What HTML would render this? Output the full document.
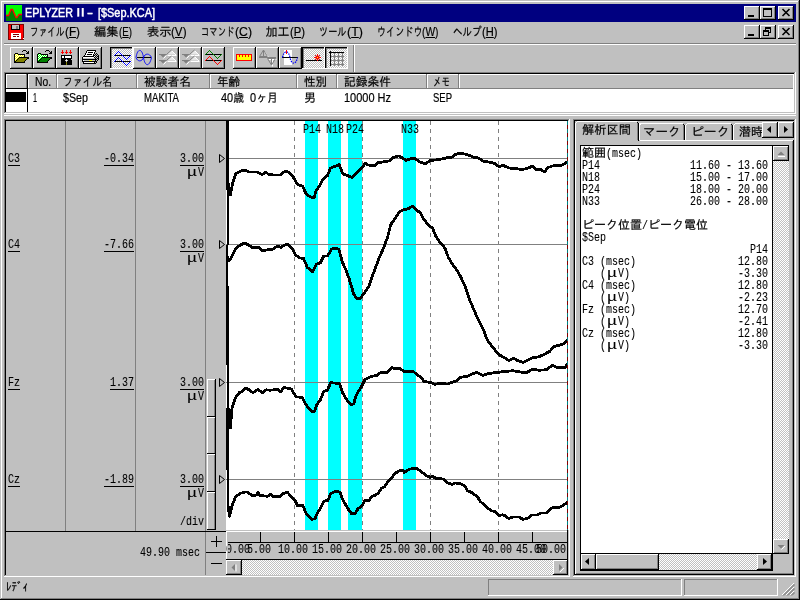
<!DOCTYPE html>
<html lang="ja"><head><meta charset="utf-8"><title>EPLYZER II - [$Sep.KCA]</title><style>
html,body{margin:0;padding:0}
body{width:800px;height:600px;background:#c0c0c0;position:relative;overflow:hidden}
#w{position:absolute;left:0;top:0;width:800px;height:600px;will-change:transform}
i{position:absolute;display:block}
b{position:absolute;display:block;font-weight:normal;white-space:pre;line-height:12px;height:12px;transform-origin:0 0;color:#000;-webkit-text-stroke:0.2px currentColor}
.u{font-family:"Liberation Sans","IPAGothic",sans-serif;font-size:12px}
.j{font-family:"Liberation Sans","IPAGothic",sans-serif;font-size:12px}
.m{font-family:"Liberation Mono","IPAGothic",monospace;font-size:13px;-webkit-text-stroke:0.1px currentColor}
svg{position:absolute;display:block;overflow:visible}
</style></head><body><div id="w"><i style="left:1px;top:1px;width:1px;height:598px;background:#fff"></i><i style="left:1px;top:1px;width:798px;height:1px;background:#fff"></i><i style="left:799px;top:0px;width:1px;height:600px;background:#000"></i><i style="left:0px;top:599px;width:800px;height:1px;background:#000"></i><i style="left:798px;top:1px;width:1px;height:598px;background:#808080"></i><i style="left:1px;top:598px;width:798px;height:1px;background:#808080"></i><i style="left:4px;top:4px;width:792px;height:18px;background:#000080"></i><svg style="left:6px;top:5px" width="16" height="16" viewBox="0 0 16 16" shape-rendering="crispEdges"><rect width="16" height="16" fill="#0f0"/><path d="M0 11h2v-1h1l2-5h2l3 8h1l2-3h3v6H0z" fill="#008000"/><path d="M0 10.5h2.5L5 4.5h1.5L10 12.500h1l2-3h3" fill="none" stroke="#f00" stroke-width="1.3" shape-rendering="auto"/></svg><b id="t0" class="u" style="left:25px;top:7px;transform:scaleX(0.8922);color:#fff;-webkit-text-stroke:0.45px #fff;">EPLYZER</b><b id="t1" class="u" style="left:71.5px;top:7px;transform:scaleX(1.4167);color:#fff;-webkit-text-stroke:0.2px #fff;">Ⅱ</b><b id="t2" class="u" style="left:87px;top:7px;transform:scaleX(1.5000);color:#fff;-webkit-text-stroke:0.45px #fff;">-</b><b id="t3" class="u" style="left:98px;top:7px;transform:scaleX(0.9090);color:#fff;-webkit-text-stroke:0.45px #fff;">[$Sep.KCA]</b><i style="left:744px;top:6px;width:16px;height:14px;background:#c0c0c0"></i><i style="left:744px;top:6px;width:16px;height:1px;background:#fff"></i><i style="left:744px;top:6px;width:1px;height:14px;background:#fff"></i><i style="left:744px;top:19px;width:16px;height:1px;background:#000"></i><i style="left:759px;top:6px;width:1px;height:14px;background:#000"></i><i style="left:745px;top:18px;width:14px;height:1px;background:#808080"></i><i style="left:758px;top:7px;width:1px;height:12px;background:#808080"></i><i style="left:748px;top:15px;width:6px;height:2px;background:#000"></i><i style="left:760px;top:6px;width:16px;height:14px;background:#c0c0c0"></i><i style="left:760px;top:6px;width:16px;height:1px;background:#fff"></i><i style="left:760px;top:6px;width:1px;height:14px;background:#fff"></i><i style="left:760px;top:19px;width:16px;height:1px;background:#000"></i><i style="left:775px;top:6px;width:1px;height:14px;background:#000"></i><i style="left:761px;top:18px;width:14px;height:1px;background:#808080"></i><i style="left:774px;top:7px;width:1px;height:12px;background:#808080"></i><i style="left:763px;top:8px;width:9px;height:9px;background:#000"></i><i style="left:764px;top:10px;width:7px;height:6px;background:#c0c0c0"></i><i style="left:778px;top:6px;width:16px;height:14px;background:#c0c0c0"></i><i style="left:778px;top:6px;width:16px;height:1px;background:#fff"></i><i style="left:778px;top:6px;width:1px;height:14px;background:#fff"></i><i style="left:778px;top:19px;width:16px;height:1px;background:#000"></i><i style="left:793px;top:6px;width:1px;height:14px;background:#000"></i><i style="left:779px;top:18px;width:14px;height:1px;background:#808080"></i><i style="left:792px;top:7px;width:1px;height:12px;background:#808080"></i><svg style="left:782px;top:9px" width="8" height="7" viewBox="0 0 8 7"><path d="M0.5 0l7 7M7.5 0l-7 7" stroke="#000" stroke-width="1.6" fill="none"/></svg><svg style="left:8px;top:24px" width="16" height="16" viewBox="0 0 16 16" shape-rendering="crispEdges"><rect x="0" y="0" width="16" height="16" fill="#800000"/><rect x="1" y="1" width="14" height="14" fill="#f00"/><rect x="3" y="1" width="9" height="5" fill="#000"/><rect x="4" y="1" width="7" height="4" fill="#c0c0c0"/><rect x="8" y="2" width="2" height="3" fill="#808080"/><rect x="3" y="9" width="10" height="6" fill="#fff"/><rect x="5" y="10" width="6" height="1" fill="#800000"/><rect x="5" y="12" width="3" height="1" fill="#800000"/><rect x="9" y="12" width="2" height="1" fill="#800000"/><rect x="15" y="14" width="1" height="1" fill="#fff"/></svg><b id="t4" class="u" style="left:29.5px;top:26px;transform:scaleX(0.7188);">ファイル</b><b id="t5" class="u" style="left:64.5px;top:26px;transform:scaleX(0.9776);">(<u>F</u>)</b><b id="t6" class="u" style="left:93.5px;top:26px;transform:scaleX(1.0208);">編集</b><b id="t7" class="u" style="left:118.5px;top:26px;transform:scaleX(0.8117);">(<u>E</u>)</b><b id="t8" class="u" style="left:146.5px;top:26px;transform:scaleX(1.0208);">表示</b><b id="t9" class="u" style="left:171.0px;top:26px;transform:scaleX(0.9678);">(<u>V</u>)</b><b id="t10" class="u" style="left:200.5px;top:26px;transform:scaleX(0.6979);">コマンド</b><b id="t11" class="u" style="left:235.0px;top:26px;transform:scaleX(1.0197);">(<u>C</u>)</b><b id="t12" class="u" style="left:265.5px;top:26px;">加工</b><b id="t13" class="u" style="left:289.5px;top:26px;transform:scaleX(0.9366);">(<u>P</u>)</b><b id="t14" class="u" style="left:318.5px;top:26px;transform:scaleX(0.7639);">ツール</b><b id="t15" class="u" style="left:347.0px;top:26px;transform:scaleX(1.0428);">(<u>T</u>)</b><b id="t16" class="u" style="left:376.5px;top:26px;transform:scaleX(0.7583);">ウインドウ</b><b id="t17" class="u" style="left:422.0px;top:26px;transform:scaleX(0.8537);">(<u>W</u>)</b><b id="t18" class="u" style="left:452.5px;top:26px;transform:scaleX(0.7917);">ヘルプ</b><b id="t19" class="u" style="left:482.0px;top:26px;transform:scaleX(0.9297);">(<u>H</u>)</b><i style="left:744px;top:25px;width:16px;height:14px;background:#c0c0c0"></i><i style="left:744px;top:25px;width:16px;height:1px;background:#fff"></i><i style="left:744px;top:25px;width:1px;height:14px;background:#fff"></i><i style="left:744px;top:38px;width:16px;height:1px;background:#000"></i><i style="left:759px;top:25px;width:1px;height:14px;background:#000"></i><i style="left:745px;top:37px;width:14px;height:1px;background:#808080"></i><i style="left:758px;top:26px;width:1px;height:12px;background:#808080"></i><i style="left:748px;top:34px;width:6px;height:2px;background:#000"></i><i style="left:760px;top:25px;width:16px;height:14px;background:#c0c0c0"></i><i style="left:760px;top:25px;width:16px;height:1px;background:#fff"></i><i style="left:760px;top:25px;width:1px;height:14px;background:#fff"></i><i style="left:760px;top:38px;width:16px;height:1px;background:#000"></i><i style="left:775px;top:25px;width:1px;height:14px;background:#000"></i><i style="left:761px;top:37px;width:14px;height:1px;background:#808080"></i><i style="left:774px;top:26px;width:1px;height:12px;background:#808080"></i><i style="left:765px;top:27px;width:6px;height:6px;background:#000"></i><i style="left:766px;top:29px;width:4px;height:3px;background:#c0c0c0"></i><i style="left:763px;top:30px;width:6px;height:6px;background:#000"></i><i style="left:764px;top:32px;width:4px;height:3px;background:#c0c0c0"></i><i style="left:778px;top:25px;width:16px;height:14px;background:#c0c0c0"></i><i style="left:778px;top:25px;width:16px;height:1px;background:#fff"></i><i style="left:778px;top:25px;width:1px;height:14px;background:#fff"></i><i style="left:778px;top:38px;width:16px;height:1px;background:#000"></i><i style="left:793px;top:25px;width:1px;height:14px;background:#000"></i><i style="left:779px;top:37px;width:14px;height:1px;background:#808080"></i><i style="left:792px;top:26px;width:1px;height:12px;background:#808080"></i><svg style="left:782px;top:28px" width="8" height="7" viewBox="0 0 8 7"><path d="M0.5 0l7 7M7.5 0l-7 7" stroke="#000" stroke-width="1.6" fill="none"/></svg><i style="left:4px;top:43px;width:792px;height:1px;background:#808080"></i><i style="left:4px;top:44px;width:792px;height:1px;background:#fff"></i><i style="left:353px;top:45px;width:1px;height:27px;background:#808080"></i><i style="left:354px;top:45px;width:1px;height:27px;background:#fff"></i><i style="left:10px;top:47px;width:23px;height:22px;background:#c0c0c0"></i><i style="left:10px;top:47px;width:23px;height:1px;background:#fff"></i><i style="left:10px;top:47px;width:1px;height:22px;background:#fff"></i><i style="left:10px;top:68px;width:23px;height:1px;background:#000"></i><i style="left:32px;top:47px;width:1px;height:22px;background:#000"></i><i style="left:11px;top:67px;width:21px;height:1px;background:#808080"></i><i style="left:31px;top:48px;width:1px;height:20px;background:#808080"></i><svg style="left:10px;top:47px" width="22" height="16" viewBox="0 0 22 16" shape-rendering="crispEdges"><path fill="#000" d="M13 3h3v1h-3zM12 4h1v1h-1zM16 4h1v1h-1zM18 4h1v1h-1zM17 5h2v1h-2zM5 6h3v1h-3zM16 6h3v1h-3zM4 7h1v1h-1zM8 7h7v1h-7zM4 8h1v1h-1zM14 8h1v1h-1zM4 9h1v1h-1zM14 9h1v1h-1zM4 10h1v1h-1zM9 10h10v1h-10zM4 11h1v1h-1zM8 11h1v1h-1zM17 11h2v1h-2zM4 12h1v1h-1zM7 12h1v1h-1zM16 12h1v1h-1zM4 13h1v1h-1zM6 13h1v1h-1zM15 13h1v1h-1zM4 14h2v1h-2zM14 14h1v1h-1zM4 15h11v1h-11z"/><path fill="#ff0" d="M5 7h1v1h-1zM7 7h1v1h-1zM6 8h1v1h-1zM8 8h1v1h-1zM10 8h1v1h-1zM12 8h1v1h-1zM5 9h1v1h-1zM7 9h1v1h-1zM9 9h1v1h-1zM11 9h1v1h-1zM13 9h1v1h-1zM6 10h1v1h-1zM8 10h1v1h-1zM5 11h1v1h-1zM7 11h1v1h-1zM6 12h1v1h-1zM5 13h1v1h-1z"/><path fill="#fff" d="M6 7h1v1h-1zM5 8h1v1h-1zM7 8h1v1h-1zM9 8h1v1h-1zM11 8h1v1h-1zM13 8h1v1h-1zM6 9h1v1h-1zM8 9h1v1h-1zM10 9h1v1h-1zM12 9h1v1h-1zM5 10h1v1h-1zM7 10h1v1h-1zM6 11h1v1h-1zM5 12h1v1h-1z"/><path fill="#808000" d="M9 11h8v1h-8zM8 12h8v1h-8zM7 13h8v1h-8zM6 14h8v1h-8z"/></svg><i style="left:33px;top:47px;width:23px;height:22px;background:#c0c0c0"></i><i style="left:33px;top:47px;width:23px;height:1px;background:#fff"></i><i style="left:33px;top:47px;width:1px;height:22px;background:#fff"></i><i style="left:33px;top:68px;width:23px;height:1px;background:#000"></i><i style="left:55px;top:47px;width:1px;height:22px;background:#000"></i><i style="left:34px;top:67px;width:21px;height:1px;background:#808080"></i><i style="left:54px;top:48px;width:1px;height:20px;background:#808080"></i><svg style="left:33px;top:47px" width="22" height="16" viewBox="0 0 22 16" shape-rendering="crispEdges"><path fill="#000" d="M13 3h3v1h-3zM12 4h1v1h-1zM16 4h1v1h-1zM18 4h1v1h-1zM17 5h2v1h-2zM5 6h3v1h-3zM16 6h3v1h-3zM4 7h1v1h-1zM8 7h7v1h-7zM4 8h1v1h-1zM14 8h1v1h-1zM4 9h1v1h-1zM14 9h1v1h-1zM4 10h1v1h-1zM9 10h10v1h-10zM4 11h1v1h-1zM8 11h1v1h-1zM17 11h2v1h-2zM4 12h1v1h-1zM7 12h1v1h-1zM16 12h1v1h-1zM4 13h1v1h-1zM6 13h1v1h-1zM15 13h1v1h-1zM4 14h2v1h-2zM14 14h1v1h-1zM4 15h11v1h-11z"/><path fill="#0f0" d="M5 7h1v1h-1zM7 7h1v1h-1zM6 8h1v1h-1zM8 8h1v1h-1zM10 8h1v1h-1zM12 8h1v1h-1zM5 9h1v1h-1zM7 9h1v1h-1zM9 9h1v1h-1zM11 9h1v1h-1zM13 9h1v1h-1zM6 10h1v1h-1zM8 10h1v1h-1zM5 11h1v1h-1zM7 11h1v1h-1zM6 12h1v1h-1zM5 13h1v1h-1z"/><path fill="#fff" d="M6 7h1v1h-1zM5 8h1v1h-1zM7 8h1v1h-1zM9 8h1v1h-1zM11 8h1v1h-1zM13 8h1v1h-1zM6 9h1v1h-1zM8 9h1v1h-1zM10 9h1v1h-1zM12 9h1v1h-1zM5 10h1v1h-1zM7 10h1v1h-1zM6 11h1v1h-1zM5 12h1v1h-1z"/><path fill="#008000" d="M9 11h8v1h-8zM8 12h8v1h-8zM7 13h8v1h-8zM6 14h8v1h-8z"/></svg><i style="left:56px;top:47px;width:23px;height:22px;background:#c0c0c0"></i><i style="left:56px;top:47px;width:23px;height:1px;background:#fff"></i><i style="left:56px;top:47px;width:1px;height:22px;background:#fff"></i><i style="left:56px;top:68px;width:23px;height:1px;background:#000"></i><i style="left:78px;top:47px;width:1px;height:22px;background:#000"></i><i style="left:57px;top:67px;width:21px;height:1px;background:#808080"></i><i style="left:77px;top:48px;width:1px;height:20px;background:#808080"></i><svg style="left:56px;top:47px" width="22" height="18" viewBox="0 0 22 18" shape-rendering="crispEdges"><path fill="#f00" d="M6 3h1v1h-1zM10 3h1v1h-1zM14 3h1v1h-1zM6 4h1v1h-1zM10 4h1v1h-1zM14 4h1v1h-1zM5 5h3v1h-3zM9 5h3v1h-3zM13 5h3v1h-3zM6 6h1v1h-1zM10 6h1v1h-1zM14 6h1v1h-1z"/><path fill="#000" d="M5 8h11v1h-11zM5 9h1v1h-1zM8 9h1v1h-1zM15 9h1v1h-1zM5 10h1v1h-1zM8 10h1v1h-1zM15 10h1v1h-1zM5 11h11v1h-11zM5 12h5v1h-5zM11 12h4v1h-4zM5 13h4v1h-4zM12 13h4v1h-4zM5 14h5v1h-5zM11 14h5v1h-5zM5 15h5v1h-5zM11 15h5v1h-5zM5 16h5v1h-5zM11 16h5v1h-5zM5 17h5v1h-5zM11 17h5v1h-5z"/><path fill="#fff" d="M6 9h2v1h-2zM9 9h6v1h-6zM6 10h2v1h-2zM9 10h6v1h-6zM10 13h1v1h-1z"/><path fill="#c0c0c0" d="M10 12h1v1h-1zM9 13h1v1h-1zM11 13h1v1h-1zM10 14h1v1h-1z"/><path fill="#808000" d="M10 15h1v1h-1zM10 16h1v1h-1zM10 17h1v1h-1z"/></svg><i style="left:79px;top:47px;width:23px;height:22px;background:#c0c0c0"></i><i style="left:79px;top:47px;width:23px;height:1px;background:#fff"></i><i style="left:79px;top:47px;width:1px;height:22px;background:#fff"></i><i style="left:79px;top:68px;width:23px;height:1px;background:#000"></i><i style="left:101px;top:47px;width:1px;height:22px;background:#000"></i><i style="left:80px;top:67px;width:21px;height:1px;background:#808080"></i><i style="left:100px;top:48px;width:1px;height:20px;background:#808080"></i><svg style="left:79px;top:47px" width="22" height="17" viewBox="0 0 22 17" shape-rendering="crispEdges"><path fill="#000" d="M8 3h9v1h-9zM7 4h1v1h-1zM16 4h1v1h-1zM7 5h1v1h-1zM9 5h5v1h-5zM15 5h1v1h-1zM6 6h1v1h-1zM15 6h1v1h-1zM17 6h1v1h-1zM6 7h1v1h-1zM8 7h5v1h-5zM14 7h1v1h-1zM16 7h1v1h-1zM18 7h1v1h-1zM5 8h1v1h-1zM14 8h2v1h-2zM17 8h1v1h-1zM19 8h1v1h-1zM4 9h11v1h-11zM16 9h1v1h-1zM18 9h2v1h-2zM3 10h1v1h-1zM15 10h1v1h-1zM17 10h1v1h-1zM19 10h1v1h-1zM3 11h1v1h-1zM16 11h1v1h-1zM18 11h2v1h-2zM3 12h15v1h-15zM19 12h1v1h-1zM3 13h1v1h-1zM16 13h1v1h-1zM18 13h1v1h-1zM3 14h15v1h-15zM4 15h1v1h-1zM15 15h1v1h-1zM17 15h1v1h-1zM4 16h13v1h-13z"/><path fill="#fff" d="M8 4h8v1h-8zM8 5h1v1h-1zM14 5h1v1h-1zM7 6h8v1h-8zM7 7h1v1h-1zM13 7h1v1h-1zM6 8h8v1h-8zM15 9h1v1h-1zM4 10h11v1h-11zM4 13h1v1h-1zM5 15h10v1h-10z"/><path fill="#c0c0c0" d="M4 11h12v1h-12zM5 13h5v1h-5zM13 13h3v1h-3z"/><path fill="#ff0" d="M10 13h3v1h-3z"/></svg><i style="left:110px;top:47px;width:23px;height:22px;background:#c0c0c0;background-image:conic-gradient(#fff 25%,#c0c0c0 0 50%,#fff 0 75%,#c0c0c0 0);background-size:2px 2px"></i><i style="left:110px;top:47px;width:23px;height:1px;background:#000"></i><i style="left:110px;top:47px;width:1px;height:22px;background:#000"></i><i style="left:111px;top:48px;width:21px;height:1px;background:#808080"></i><i style="left:111px;top:48px;width:1px;height:20px;background:#808080"></i><i style="left:110px;top:68px;width:23px;height:1px;background:#fff"></i><i style="left:132px;top:47px;width:1px;height:22px;background:#fff"></i><svg style="left:110px;top:47px" width="23" height="22" viewBox="0 0 23 22" shape-rendering="crispEdges"><path fill="#00f" d="M8 4h1v1h-1zM7 5h1v1h-1zM9 5h1v1h-1zM6 6h1v1h-1zM10 6h1v1h-1zM5 7h1v1h-1zM11 7h1v1h-1zM4 8h1v1h-1zM12 8h1v1h-1zM20 8h1v1h-1zM13 9h1v1h-1zM19 9h1v1h-1zM8 10h1v1h-1zM14 10h1v1h-1zM18 10h1v1h-1zM7 11h1v1h-1zM9 11h1v1h-1zM15 11h1v1h-1zM17 11h1v1h-1zM6 12h1v1h-1zM10 12h1v1h-1zM16 12h1v1h-1zM5 13h1v1h-1zM11 13h1v1h-1zM4 14h1v1h-1zM12 14h1v1h-1zM20 14h1v1h-1zM13 15h1v1h-1zM19 15h1v1h-1zM14 16h1v1h-1zM18 16h1v1h-1zM15 17h1v1h-1zM17 17h1v1h-1zM16 18h1v1h-1z"/><path fill="#000" d="M5 8h7v1h-7zM13 8h7v1h-7zM5 14h7v1h-7zM13 14h7v1h-7z"/></svg><i style="left:133px;top:47px;width:23px;height:22px;background:#c0c0c0"></i><i style="left:133px;top:47px;width:23px;height:1px;background:#fff"></i><i style="left:133px;top:47px;width:1px;height:22px;background:#fff"></i><i style="left:133px;top:68px;width:23px;height:1px;background:#000"></i><i style="left:155px;top:47px;width:1px;height:22px;background:#000"></i><i style="left:134px;top:67px;width:21px;height:1px;background:#808080"></i><i style="left:154px;top:48px;width:1px;height:20px;background:#808080"></i><svg style="left:133px;top:47px" width="23" height="22" viewBox="0 0 23 22"><path d="M4 10.500h14" stroke="#000"/><path d="M3 10.500C4.500 1 9 1 10.500 10.500C12 20 16.500 20 18.500 10.500M3 10.500C4.500 15 9 15 10.500 10.500C12 6 16.500 6 18.500 10.500" fill="none" stroke="#00f" stroke-width="0.9"/></svg><i style="left:156px;top:47px;width:23px;height:22px;background:#c0c0c0"></i><i style="left:156px;top:47px;width:23px;height:1px;background:#fff"></i><i style="left:156px;top:47px;width:1px;height:22px;background:#fff"></i><i style="left:156px;top:68px;width:23px;height:1px;background:#000"></i><i style="left:178px;top:47px;width:1px;height:22px;background:#000"></i><i style="left:157px;top:67px;width:21px;height:1px;background:#808080"></i><i style="left:177px;top:48px;width:1px;height:20px;background:#808080"></i><svg style="left:156px;top:47px" width="23" height="22" viewBox="0 0 23 22"><path d="M11 7.5l4.500-4l4 4z" fill="#e8e8e8"/><path d="M11.500 8.5h9M7.500 11.5l3-3M16 4.0l4 4" fill="none" stroke="#fff"/><path d="M3 7.5h7.500l5-4.500" fill="none" stroke="#808080"/><path d="M4.500 8.0h5l-2.500 2.500z" fill="#808080"/><path d="M11 13.5l4.500-4l4 4z" fill="#e8e8e8"/><path d="M11.500 14.5h9M7.500 17.5l3-3M16 10.0l4 4" fill="none" stroke="#fff"/><path d="M3 13.5h7.500l5-4.500" fill="none" stroke="#808080"/><path d="M4.500 14.0h5l-2.500 2.500z" fill="#808080"/></svg><i style="left:179px;top:47px;width:23px;height:22px;background:#c0c0c0"></i><i style="left:179px;top:47px;width:23px;height:1px;background:#fff"></i><i style="left:179px;top:47px;width:1px;height:22px;background:#fff"></i><i style="left:179px;top:68px;width:23px;height:1px;background:#000"></i><i style="left:201px;top:47px;width:1px;height:22px;background:#000"></i><i style="left:180px;top:67px;width:21px;height:1px;background:#808080"></i><i style="left:200px;top:48px;width:1px;height:20px;background:#808080"></i><svg style="left:179px;top:47px" width="23" height="22" viewBox="0 0 23 22"><path d="M11 7.5l4.500-4l4 4z" fill="#e8e8e8"/><path d="M11.500 8.5h9M7.500 11.5l3-3M16 4.0l4 4" fill="none" stroke="#fff"/><path d="M3 7.5h7.500l5-4.500" fill="none" stroke="#808080"/><path d="M4.500 8.0h5l-2.500 2.500z" fill="#808080"/><path d="M11 13.5l4.500-4l4 4z" fill="#e8e8e8"/><path d="M11.500 14.5h9M7.500 17.5l3-3M16 10.0l4 4" fill="none" stroke="#fff"/><path d="M3 13.5h7.500l5-4.500" fill="none" stroke="#808080"/><path d="M4.500 14.0h5l-2.500 2.500z" fill="#808080"/></svg><i style="left:202px;top:47px;width:23px;height:22px;background:#c0c0c0"></i><i style="left:202px;top:47px;width:23px;height:1px;background:#fff"></i><i style="left:202px;top:47px;width:1px;height:22px;background:#fff"></i><i style="left:202px;top:68px;width:23px;height:1px;background:#000"></i><i style="left:224px;top:47px;width:1px;height:22px;background:#000"></i><i style="left:203px;top:67px;width:21px;height:1px;background:#808080"></i><i style="left:223px;top:48px;width:1px;height:20px;background:#808080"></i><svg style="left:202px;top:47px" width="23" height="22" viewBox="0 0 23 22" shape-rendering="crispEdges"><path fill="#008000" d="M7 3h1v1h-1zM6 4h1v1h-1zM8 4h1v1h-1zM5 5h1v1h-1zM9 5h1v1h-1zM4 6h1v1h-1zM10 6h1v1h-1zM3 7h1v1h-1zM11 7h1v1h-1zM19 7h1v1h-1zM12 8h1v1h-1zM18 8h1v1h-1zM13 9h1v1h-1zM17 9h1v1h-1zM14 10h1v1h-1zM16 10h1v1h-1zM15 11h1v1h-1z"/><path fill="#000" d="M4 7h7v1h-7zM12 7h7v1h-7zM4 13h7v1h-7zM12 13h7v1h-7z"/><path fill="#f00" d="M7 9h1v1h-1zM6 10h1v1h-1zM8 10h1v1h-1zM5 11h1v1h-1zM9 11h1v1h-1zM4 12h1v1h-1zM10 12h1v1h-1zM3 13h1v1h-1zM11 13h1v1h-1zM19 13h1v1h-1zM12 14h1v1h-1zM18 14h1v1h-1zM13 15h1v1h-1zM17 15h1v1h-1zM14 16h1v1h-1zM16 16h1v1h-1zM15 17h1v1h-1z"/></svg><i style="left:233px;top:47px;width:23px;height:22px;background:#c0c0c0"></i><i style="left:233px;top:47px;width:23px;height:1px;background:#fff"></i><i style="left:233px;top:47px;width:1px;height:22px;background:#fff"></i><i style="left:233px;top:68px;width:23px;height:1px;background:#000"></i><i style="left:255px;top:47px;width:1px;height:22px;background:#000"></i><i style="left:234px;top:67px;width:21px;height:1px;background:#808080"></i><i style="left:254px;top:48px;width:1px;height:20px;background:#808080"></i><svg style="left:233px;top:47px" width="22" height="14" viewBox="0 0 22 14" shape-rendering="crispEdges"><path fill="#f00" d="M3 7h16v1h-16zM3 8h1v1h-1zM6 8h1v1h-1zM9 8h1v1h-1zM12 8h1v1h-1zM15 8h1v1h-1zM18 8h1v1h-1zM3 9h1v1h-1zM6 9h1v1h-1zM9 9h1v1h-1zM12 9h1v1h-1zM15 9h1v1h-1zM18 9h1v1h-1zM3 10h1v1h-1zM18 10h1v1h-1zM3 11h1v1h-1zM18 11h1v1h-1zM3 12h1v1h-1zM18 12h1v1h-1zM3 13h16v1h-16z"/><path fill="#ff0" d="M4 8h2v1h-2zM7 8h2v1h-2zM10 8h2v1h-2zM13 8h2v1h-2zM16 8h2v1h-2zM4 9h2v1h-2zM7 9h2v1h-2zM10 9h2v1h-2zM13 9h2v1h-2zM16 9h2v1h-2zM4 10h14v1h-14zM4 11h14v1h-14zM4 12h14v1h-14z"/></svg><i style="left:256px;top:47px;width:23px;height:22px;background:#c0c0c0"></i><i style="left:256px;top:47px;width:23px;height:1px;background:#fff"></i><i style="left:256px;top:47px;width:1px;height:22px;background:#fff"></i><i style="left:256px;top:68px;width:23px;height:1px;background:#000"></i><i style="left:278px;top:47px;width:1px;height:22px;background:#000"></i><i style="left:257px;top:67px;width:21px;height:1px;background:#808080"></i><i style="left:277px;top:48px;width:1px;height:20px;background:#808080"></i><svg style="left:256px;top:47px" width="23" height="22" viewBox="0 0 23 22"><path d="M4.500 10.500h7l4 0M8.500 4.500l4 6M12.500 12.500h8M16.500 12.500v7" fill="none" stroke="#fff"/><path d="M3.500 9.500h7.500M3.500 9.500l4-6.500l4 6.500M7.500 3v6M3 10.500h17M11.500 11.500h8l-4 6.500zM15.500 11v7" fill="none" stroke="#808080"/></svg><i style="left:279px;top:47px;width:23px;height:22px;background:#c0c0c0"></i><i style="left:279px;top:47px;width:23px;height:1px;background:#fff"></i><i style="left:279px;top:47px;width:1px;height:22px;background:#fff"></i><i style="left:279px;top:68px;width:23px;height:1px;background:#000"></i><i style="left:301px;top:47px;width:1px;height:22px;background:#000"></i><i style="left:280px;top:67px;width:21px;height:1px;background:#808080"></i><i style="left:300px;top:48px;width:1px;height:20px;background:#808080"></i><svg style="left:279px;top:47px" width="23" height="22" viewBox="0 0 23 22"><rect x="5" y="3" width="8" height="15" fill="#fff"/><path d="M3 10.500h16" stroke="#000"/><path d="M3.500 10.500C5 3 9.500 3 11 10.500C12.500 18 17 18 18.500 10.500" fill="none" stroke="#00f" stroke-width="1.2" stroke-dasharray="1.5 1"/><path d="M7.500 3v4" stroke="#f00"/></svg><i style="left:302px;top:47px;width:23px;height:22px;background:#c0c0c0;background-image:conic-gradient(#fff 25%,#c0c0c0 0 50%,#fff 0 75%,#c0c0c0 0);background-size:2px 2px"></i><i style="left:302px;top:47px;width:23px;height:1px;background:#000"></i><i style="left:302px;top:47px;width:1px;height:22px;background:#000"></i><i style="left:303px;top:48px;width:21px;height:1px;background:#808080"></i><i style="left:303px;top:48px;width:1px;height:20px;background:#808080"></i><i style="left:302px;top:68px;width:23px;height:1px;background:#fff"></i><i style="left:324px;top:47px;width:1px;height:22px;background:#fff"></i><svg style="left:302px;top:47px" width="22" height="14" viewBox="0 0 22 14" shape-rendering="crispEdges"><path fill="#f00" d="M15 7h1v1h-1zM13 8h1v1h-1zM15 8h1v1h-1zM17 8h1v1h-1zM14 9h3v1h-3zM12 10h3v1h-3zM16 10h3v1h-3zM14 11h3v1h-3zM13 12h1v1h-1zM15 12h1v1h-1zM17 12h1v1h-1zM15 13h1v1h-1z"/><path fill="#ff0" d="M15 10h1v1h-1z"/><path fill="#000" d="M4 13h11v1h-11zM16 13h4v1h-4z"/></svg><i style="left:325px;top:47px;width:23px;height:22px;background:#c0c0c0;background-image:conic-gradient(#fff 25%,#c0c0c0 0 50%,#fff 0 75%,#c0c0c0 0);background-size:2px 2px"></i><i style="left:325px;top:47px;width:23px;height:1px;background:#000"></i><i style="left:325px;top:47px;width:1px;height:22px;background:#000"></i><i style="left:326px;top:48px;width:21px;height:1px;background:#808080"></i><i style="left:326px;top:48px;width:1px;height:20px;background:#808080"></i><i style="left:325px;top:68px;width:23px;height:1px;background:#fff"></i><i style="left:347px;top:47px;width:1px;height:22px;background:#fff"></i><svg style="left:325px;top:47px" width="22" height="19" viewBox="0 0 22 19" shape-rendering="crispEdges"><path fill="#000" d="M5 4h1v1h-1zM4 5h15v1h-15zM5 6h1v1h-1zM5 7h1v1h-1zM5 8h1v1h-1zM5 9h1v1h-1zM5 10h1v1h-1zM5 11h1v1h-1zM5 12h1v1h-1zM5 13h1v1h-1zM5 14h1v1h-1zM5 15h1v1h-1zM5 16h1v1h-1zM5 17h1v1h-1zM5 18h1v1h-1z"/><path fill="#808080" d="M9 6h1v1h-1zM13 6h1v1h-1zM17 6h1v1h-1zM9 7h1v1h-1zM13 7h1v1h-1zM17 7h1v1h-1zM9 8h1v1h-1zM13 8h1v1h-1zM17 8h1v1h-1zM6 9h13v1h-13zM9 10h1v1h-1zM13 10h1v1h-1zM17 10h1v1h-1zM9 11h1v1h-1zM13 11h1v1h-1zM17 11h1v1h-1zM9 12h1v1h-1zM13 12h1v1h-1zM17 12h1v1h-1zM6 13h13v1h-13zM9 14h1v1h-1zM13 14h1v1h-1zM17 14h1v1h-1zM9 15h1v1h-1zM13 15h1v1h-1zM17 15h1v1h-1zM9 16h1v1h-1zM13 16h1v1h-1zM17 16h1v1h-1zM6 17h13v1h-13zM9 18h1v1h-1zM13 18h1v1h-1zM17 18h1v1h-1z"/></svg><i style="left:6px;top:74px;width:788px;height:38px;background:#fff"></i><i style="left:4px;top:72px;width:792px;height:1px;background:#808080"></i><i style="left:4px;top:72px;width:1px;height:42px;background:#808080"></i><i style="left:5px;top:73px;width:790px;height:1px;background:#000"></i><i style="left:5px;top:73px;width:1px;height:40px;background:#000"></i><i style="left:5px;top:112px;width:791px;height:1px;background:#c0c0c0"></i><i style="left:794px;top:73px;width:1px;height:40px;background:#c0c0c0"></i><i style="left:4px;top:113px;width:792px;height:1px;background:#fff"></i><i style="left:795px;top:72px;width:1px;height:42px;background:#fff"></i><i style="left:6px;top:74px;width:788px;height:15px;background:#c0c0c0"></i><i style="left:6px;top:74px;width:1px;height:15px;background:#fff"></i><i style="left:6px;top:74px;width:21px;height:1px;background:#fff"></i><i style="left:26px;top:74px;width:1px;height:15px;background:#808080"></i><i style="left:6px;top:88px;width:21px;height:1px;background:#000"></i><i style="left:27px;top:74px;width:1px;height:38px;background:#000"></i><i style="left:6px;top:92px;width:20px;height:10px;background:#000"></i><i style="left:28px;top:74px;width:1px;height:14px;background:#fff"></i><i style="left:28px;top:74px;width:29px;height:1px;background:#fff"></i><i style="left:56px;top:74px;width:1px;height:14px;background:#808080"></i><i style="left:57px;top:74px;width:1px;height:14px;background:#fff"></i><i style="left:57px;top:74px;width:80px;height:1px;background:#fff"></i><i style="left:136px;top:74px;width:1px;height:14px;background:#808080"></i><i style="left:137px;top:74px;width:1px;height:14px;background:#fff"></i><i style="left:137px;top:74px;width:73px;height:1px;background:#fff"></i><i style="left:209px;top:74px;width:1px;height:14px;background:#808080"></i><i style="left:210px;top:74px;width:1px;height:14px;background:#fff"></i><i style="left:210px;top:74px;width:87px;height:1px;background:#fff"></i><i style="left:296px;top:74px;width:1px;height:14px;background:#808080"></i><i style="left:297px;top:74px;width:1px;height:14px;background:#fff"></i><i style="left:297px;top:74px;width:40px;height:1px;background:#fff"></i><i style="left:336px;top:74px;width:1px;height:14px;background:#808080"></i><i style="left:337px;top:74px;width:1px;height:14px;background:#fff"></i><i style="left:337px;top:74px;width:90px;height:1px;background:#fff"></i><i style="left:426px;top:74px;width:1px;height:14px;background:#808080"></i><i style="left:427px;top:74px;width:1px;height:14px;background:#fff"></i><i style="left:427px;top:74px;width:32px;height:1px;background:#fff"></i><i style="left:458px;top:74px;width:1px;height:14px;background:#808080"></i><i style="left:459px;top:74px;width:1px;height:14px;background:#fff"></i><i style="left:459px;top:74px;width:334px;height:1px;background:#fff"></i><i style="left:28px;top:88px;width:765px;height:1px;background:#808080"></i><i style="left:793px;top:74px;width:1px;height:15px;background:#fff"></i><b id="t20" class="u" style="left:35px;top:76px;transform:scaleX(0.8562);">No.</b><b id="t21" class="u" style="left:63px;top:76px;transform:scaleX(0.8167);">ファイル名</b><b id="t22" class="u" style="left:144px;top:76px;transform:scaleX(0.9792);">被験者名</b><b id="t23" class="u" style="left:217px;top:76px;transform:scaleX(0.9583);">年齢</b><b id="t24" class="u" style="left:304px;top:76px;transform:scaleX(0.9583);">性別</b><b id="t25" class="u" style="left:344px;top:76px;transform:scaleX(0.9792);">記録条件</b><b id="t26" class="u" style="left:433px;top:76px;transform:scaleX(0.7083);">メモ</b><b id="t27" class="u" style="left:33px;top:92px;transform:scaleX(0.5981);">1</b><b id="t28" class="u" style="left:63px;top:92px;transform:scaleX(0.8919);">$Sep</b><b id="t29" class="u" style="left:144px;top:92px;transform:scaleX(0.7994);">MAKITA</b><b id="t30" class="u" style="left:221px;top:92px;transform:scaleX(0.9090);">40歳  0ヶ月</b><b id="t31" class="u" style="left:304px;top:92px;">男</b><b id="t32" class="u" style="left:344px;top:92px;transform:scaleX(0.9148);">10000 Hz</b><b id="t33" class="u" style="left:433px;top:92px;transform:scaleX(0.7912);">SEP</b><i style="left:4px;top:115px;width:792px;height:1px;background:#fff"></i><i style="left:4px;top:119px;width:566px;height:1px;background:#808080"></i><i style="left:4px;top:119px;width:1px;height:458px;background:#808080"></i><i style="left:5px;top:120px;width:564px;height:1px;background:#000"></i><i style="left:5px;top:120px;width:1px;height:456px;background:#000"></i><i style="left:5px;top:575px;width:565px;height:1px;background:#c0c0c0"></i><i style="left:568px;top:120px;width:1px;height:456px;background:#c0c0c0"></i><i style="left:4px;top:576px;width:566px;height:1px;background:#fff"></i><i style="left:569px;top:119px;width:1px;height:458px;background:#fff"></i><i style="left:65px;top:121px;width:1px;height:410px;background:#808080"></i><i style="left:135px;top:121px;width:1px;height:410px;background:#808080"></i><i style="left:205px;top:121px;width:1px;height:454px;background:#808080"></i><i style="left:6px;top:531px;width:220px;height:1px;background:#000"></i><i style="left:226px;top:121px;width:342px;height:409px;background:#fff"></i><i style="left:226px;top:531px;width:342px;height:1px;background:#fff"></i><i style="left:305px;top:121px;width:13px;height:409px;background:#0ff"></i><i style="left:328px;top:121px;width:13px;height:409px;background:#0ff"></i><i style="left:348px;top:121px;width:14px;height:409px;background:#0ff"></i><i style="left:403px;top:121px;width:13px;height:409px;background:#0ff"></i><i style="left:294px;top:121px;width:1px;height:409px;background:transparent;background-image:linear-gradient(#808080 0 4px,transparent 4px 8px);background-size:1px 8px"></i><i style="left:362px;top:121px;width:1px;height:409px;background:transparent;background-image:linear-gradient(#808080 0 4px,transparent 4px 8px);background-size:1px 8px"></i><i style="left:430px;top:121px;width:1px;height:409px;background:transparent;background-image:linear-gradient(#808080 0 4px,transparent 4px 8px);background-size:1px 8px"></i><i style="left:498px;top:121px;width:1px;height:409px;background:transparent;background-image:linear-gradient(#808080 0 4px,transparent 4px 8px);background-size:1px 8px"></i><i style="left:226px;top:158px;width:341px;height:1px;background:#808080"></i><i style="left:226px;top:244px;width:341px;height:1px;background:#808080"></i><i style="left:226px;top:382px;width:341px;height:1px;background:#808080"></i><i style="left:226px;top:479px;width:341px;height:1px;background:#808080"></i><svg style="left:0;top:0" width="800" height="600" viewBox="0 0 800 600"><g fill="none" stroke="#000" stroke-width="2.8" stroke-linejoin="round" stroke-linecap="square" shape-rendering="crispEdges"><polyline points="228,182 229,194 230.3,195 232.5,184 235.6,173.75 240.6,171 245,170 249,172 257.5,172 262,174.75 266,172 268,174 273.75,175 281,175 283,172 287.5,171.5 292,175 295,180 297.5,184.4 302.5,186 306,193.75 309,196 312.5,198 314,198 316,191 319.4,186 323,179 327.5,175.6 330.6,168 336,166 339,164.4 343,174 347.5,175.6 352,177.5 357,172 362.5,167.5 365,163 368,165 374,166 378,162.5 382.5,162 389,161 392.5,158 394.4,157 398.75,156 402.5,158 406,160.6 412,158 415.6,158.75 419.4,162 425.6,163.75 430,160.6 440,159.4 446,158 452.5,157 455.6,154.4 460,153 467.5,154.75 473,157 478.75,158 483,161 491,162.5 495,163.75 499.4,167 502.5,165 508.75,168 516,168.75 522.5,169.4 528.75,168 532,166 537,170 540.6,169.4 544.4,172 548,167.5 552.5,166 562.5,165 567,162"/><polyline points="228,257.5 229,261 230,260 232.5,255 236,248 240.6,245 244.4,243 248.75,245 252.5,247.75 258.75,247 262.5,251 267.5,249.75 272.5,249.4 277.5,246 281,247.5 284.4,245 288,244.4 292,248 295.6,255 300,258 303.5,258.3 307.3,267.5 312.5,271.8 316.3,264.3 320.5,262.6 323.8,256 327.5,256 331.5,249.2 334.8,248 338.9,249.5 342.5,262.4 345.9,269.7 349.2,278.9 353.6,293.6 356,298 359.6,298.7 363.3,294.5 368.8,286.2 373.4,273.4 378.9,258.7 384.4,245.9 387.7,236.7 390.8,224.5 395.5,218 399.2,212 402.8,210 408.3,208.75 412.4,206 416.6,210.6 420.25,212.4 423,217.9 428.5,225.25 432.5,228 435.8,236.25 439.5,241.75 445,248.2 448.3,257.3 453.25,265.6 456.9,270.2 460.6,276.6 465.2,286.7 468.8,297.7 471.2,303.5 476.5,315.7 482.9,328.5 487.5,340.4 493.9,348.7 499.4,355 504.9,357.8 509.1,360.6 513.2,358.2 517.75,360.6 523.25,362.4 528.75,359.7 533.3,357.5 538.8,356.9 544.3,354.2 549.8,351.4 553.5,346.8 559.9,345 564.5,343.5 567.25,339.9"/><polyline points="228,413.75 229.5,428 230.5,428 231.9,408.75 235.6,397.5 239.4,392.5 242.5,391.25 245.6,388 249.4,390 253,392.75 258,389.4 262.5,392.75 266.25,389.75 270,390.25 277.5,389.4 280.6,391.9 283.75,387.5 291.25,389 296.25,396.9 301.9,397.25 306.25,405 311.25,411.25 314.4,411.25 316.9,404.4 320.6,399.4 323.75,391.5 327.5,390 330.6,382.75 339.4,383.5 342.5,392.5 346.9,400 351.25,404.6 353.75,403.75 356.25,395 361.25,386.9 365,379.4 368,378 371.9,376.25 376.9,375.6 379.4,373 387.5,372.25 391.9,367.5 395.6,368.75 398.75,368 403.75,371.25 408.75,371.9 413,371.25 417.5,375 421.9,378 423.75,381.5 431.25,382.5 434.4,384.4 440,383.5 447.5,384 452.5,382.25 457.5,380.25 460,377.5 467.3,376.2 472.8,373.6 476.9,372.4 482.9,375.25 489.3,373.4 496.7,372.5 504,371.6 513.2,370.7 520.5,372.1 526.9,372.5 532.4,369.2 538.8,370.3 546.2,369.75 552.6,365.2 558.1,367.9 565.4,367.4 567.25,364.25"/><polyline points="228.3,507.5 229.4,516.25 231.9,506.25 235.6,496.9 240,493.5 245,491.9 248,492.25 251.9,495.6 256.25,495 258,492.25 260,495.6 267.5,496.25 270.6,494.4 272.5,496.5 280,496.25 283,493.75 287.5,492.25 291.25,496.9 295,500.6 297.5,505.6 303,505.6 306.25,514 312.2,519.4 315,518.5 317.5,512.8 320.6,508 323.75,501.25 328,500.25 330.6,493.5 336.25,491 340,492.5 343,500 347.5,508 351.25,513.5 355,513.5 358,508.75 362,505.6 365,500 368.75,500.6 372,496.25 375,495.6 378.75,492.5 381.25,488.5 384.4,486.9 387.5,482.5 392.5,476.9 393.75,474.4 398.75,471 402.5,470 404.4,472.5 408.75,469.4 415.6,468 420,470.6 426.25,475.6 430,477.25 432.5,476.5 436.25,478.5 443.75,479 446.9,482.5 452.5,484.4 455,483 460,483.5 465,486.25 467.5,490.6 472.5,493 478,497.5 480,501.25 483.75,504.4 487.5,508 491.25,510.6 495.6,512 498.75,515.6 502.5,514.75 505.6,516 508.75,518.5 513,516.9 518.75,516.9 523,519.4 528.75,518 532,515 537,515 540.6,513 546.25,513 550,509.4 553,507.25 557.5,508 563,505.6 567,502.5"/></g></svg><i style="left:226px;top:121px;width:3px;height:69px;background:#000"></i><i style="left:227px;top:190px;width:2px;height:55px;background:#000"></i><i style="left:226px;top:245px;width:2px;height:41px;background:#000"></i><i style="left:226px;top:286px;width:3px;height:79px;background:#000"></i><i style="left:227px;top:365px;width:2px;height:43px;background:#000"></i><i style="left:226px;top:408px;width:4px;height:20px;background:#000"></i><i style="left:226px;top:428px;width:3px;height:42px;background:#000"></i><i style="left:227px;top:470px;width:2px;height:42px;background:#000"></i><i style="left:567px;top:121px;width:1px;height:409px;background:transparent;background-image:linear-gradient(#008080 0 4px,#800000 4px 8px);background-size:1px 8px"></i><i style="left:568px;top:121px;width:1px;height:409px;background:#fff"></i><b id="t34" class="m" style="left:303px;top:124px;transform:scaleX(0.7690);">P14</b><b id="t35" class="m" style="left:326px;top:124px;transform:scaleX(0.7690);">N18</b><b id="t36" class="m" style="left:346px;top:124px;transform:scaleX(0.7690);">P24</b><b id="t37" class="m" style="left:401px;top:124px;transform:scaleX(0.7690);">N33</b><b id="t38" class="m" style="left:8px;top:153px;transform:scaleX(0.7688);">C3</b><i style="left:8px;top:165px;width:12px;height:1px;background:#000"></i><b id="t39" class="m" style="left:104px;top:153px;transform:scaleX(0.7689);">-0.34</b><i style="left:104px;top:165px;width:30px;height:1px;background:#000"></i><b id="t40" class="m" style="left:180px;top:153px;transform:scaleX(0.7688);">3.00</b><i style="left:180px;top:165px;width:24px;height:1px;background:#000"></i><b id="t41" class="m" style="left:186.5px;top:167px;transform:scaleX(1.2800);">μ</b><b id="t42" class="m" style="left:198px;top:167px;transform:scaleX(0.7680);">V</b><svg style="left:219px;top:154px" width="6" height="9" viewBox="0 0 6 9"><path d="M0.500 0.500v8l5-4z" fill="#c0c0c0" stroke="#000" stroke-width="1"/></svg><b id="t43" class="m" style="left:8px;top:239px;transform:scaleX(0.7688);">C4</b><i style="left:8px;top:251px;width:12px;height:1px;background:#000"></i><b id="t44" class="m" style="left:104px;top:239px;transform:scaleX(0.7689);">-7.66</b><i style="left:104px;top:251px;width:30px;height:1px;background:#000"></i><b id="t45" class="m" style="left:180px;top:239px;transform:scaleX(0.7688);">3.00</b><i style="left:180px;top:251px;width:24px;height:1px;background:#000"></i><b id="t46" class="m" style="left:186.5px;top:253px;transform:scaleX(1.2800);">μ</b><b id="t47" class="m" style="left:198px;top:253px;transform:scaleX(0.7680);">V</b><svg style="left:219px;top:240px" width="6" height="9" viewBox="0 0 6 9"><path d="M0.500 0.500v8l5-4z" fill="#c0c0c0" stroke="#000" stroke-width="1"/></svg><b id="t48" class="m" style="left:8px;top:377px;transform:scaleX(0.7688);">Fz</b><i style="left:8px;top:389px;width:12px;height:1px;background:#000"></i><b id="t49" class="m" style="left:110px;top:377px;transform:scaleX(0.7688);">1.37</b><i style="left:110px;top:389px;width:24px;height:1px;background:#000"></i><b id="t50" class="m" style="left:180px;top:377px;transform:scaleX(0.7688);">3.00</b><i style="left:180px;top:389px;width:24px;height:1px;background:#000"></i><b id="t51" class="m" style="left:186.5px;top:391px;transform:scaleX(1.2800);">μ</b><b id="t52" class="m" style="left:198px;top:391px;transform:scaleX(0.7680);">V</b><svg style="left:219px;top:378px" width="6" height="9" viewBox="0 0 6 9"><path d="M0.500 0.500v8l5-4z" fill="#c0c0c0" stroke="#000" stroke-width="1"/></svg><b id="t53" class="m" style="left:8px;top:474px;transform:scaleX(0.7688);">Cz</b><i style="left:8px;top:486px;width:12px;height:1px;background:#000"></i><b id="t54" class="m" style="left:104px;top:474px;transform:scaleX(0.7689);">-1.89</b><i style="left:104px;top:486px;width:30px;height:1px;background:#000"></i><b id="t55" class="m" style="left:180px;top:474px;transform:scaleX(0.7688);">3.00</b><i style="left:180px;top:486px;width:24px;height:1px;background:#000"></i><b id="t56" class="m" style="left:186.5px;top:488px;transform:scaleX(1.2800);">μ</b><b id="t57" class="m" style="left:198px;top:488px;transform:scaleX(0.7680);">V</b><svg style="left:219px;top:475px" width="6" height="9" viewBox="0 0 6 9"><path d="M0.500 0.500v8l5-4z" fill="#c0c0c0" stroke="#000" stroke-width="1"/></svg><b id="t58" class="m" style="left:180px;top:516px;transform:scaleX(0.7688);">/div</b><b id="t59" class="m" style="left:140px;top:547px;transform:scaleX(0.7691);">49.90 msec</b><i style="left:207px;top:379px;width:9px;height:38px;background:#c0c0c0"></i><i style="left:207px;top:379px;width:1px;height:38px;background:#fff"></i><i style="left:207px;top:379px;width:9px;height:1px;background:#fff"></i><i style="left:214px;top:380px;width:1px;height:37px;background:#808080"></i><i style="left:215px;top:379px;width:1px;height:38px;background:#000"></i><i style="left:207px;top:416px;width:9px;height:1px;background:#000"></i><i style="left:207px;top:417px;width:9px;height:37px;background:#c0c0c0"></i><i style="left:207px;top:417px;width:1px;height:37px;background:#fff"></i><i style="left:207px;top:417px;width:9px;height:1px;background:#fff"></i><i style="left:214px;top:418px;width:1px;height:36px;background:#808080"></i><i style="left:215px;top:417px;width:1px;height:37px;background:#000"></i><i style="left:207px;top:453px;width:9px;height:1px;background:#000"></i><i style="left:207px;top:454px;width:9px;height:38px;background:#c0c0c0"></i><i style="left:207px;top:454px;width:1px;height:38px;background:#fff"></i><i style="left:207px;top:454px;width:9px;height:1px;background:#fff"></i><i style="left:214px;top:455px;width:1px;height:37px;background:#808080"></i><i style="left:215px;top:454px;width:1px;height:38px;background:#000"></i><i style="left:207px;top:491px;width:9px;height:1px;background:#000"></i><i style="left:207px;top:492px;width:9px;height:38px;background:#c0c0c0"></i><i style="left:207px;top:492px;width:1px;height:38px;background:#fff"></i><i style="left:207px;top:492px;width:9px;height:1px;background:#fff"></i><i style="left:214px;top:493px;width:1px;height:37px;background:#808080"></i><i style="left:215px;top:492px;width:1px;height:38px;background:#000"></i><i style="left:207px;top:529px;width:9px;height:1px;background:#000"></i><i style="left:206px;top:552px;width:20px;height:1px;background:#000"></i><i style="left:211px;top:541px;width:11px;height:1px;background:#000"></i><i style="left:216px;top:536px;width:1px;height:11px;background:#000"></i><i style="left:211px;top:563px;width:11px;height:1px;background:#000"></i><i style="left:226px;top:531px;width:1px;height:28px;background:#fff"></i><i style="left:228px;top:542px;width:339px;height:1px;background:#000"></i><i style="left:260px;top:532px;width:1px;height:11px;background:#000"></i><i style="left:294px;top:532px;width:1px;height:11px;background:#000"></i><i style="left:328px;top:532px;width:1px;height:11px;background:#000"></i><i style="left:362px;top:532px;width:1px;height:11px;background:#000"></i><i style="left:396px;top:532px;width:1px;height:11px;background:#000"></i><i style="left:430px;top:532px;width:1px;height:11px;background:#000"></i><i style="left:464px;top:532px;width:1px;height:11px;background:#000"></i><i style="left:498px;top:532px;width:1px;height:11px;background:#000"></i><i style="left:532px;top:532px;width:1px;height:11px;background:#000"></i><b id="t60" class="m" style="left:226px;top:544px;transform:scaleX(0.7688);">0.00</b><b id="t61" class="m" style="left:247px;top:544px;transform:scaleX(0.7688);">5.00</b><b id="t62" class="m" style="left:278px;top:544px;transform:scaleX(0.7689);">10.00</b><b id="t63" class="m" style="left:312px;top:544px;transform:scaleX(0.7689);">15.00</b><b id="t64" class="m" style="left:346px;top:544px;transform:scaleX(0.7689);">20.00</b><b id="t65" class="m" style="left:380px;top:544px;transform:scaleX(0.7689);">25.00</b><b id="t66" class="m" style="left:414px;top:544px;transform:scaleX(0.7689);">30.00</b><b id="t67" class="m" style="left:448px;top:544px;transform:scaleX(0.7689);">35.00</b><b id="t68" class="m" style="left:482px;top:544px;transform:scaleX(0.7689);">40.00</b><b id="t69" class="m" style="left:516px;top:544px;transform:scaleX(0.7689);">45.00</b><b id="t70" class="m" style="left:536px;top:544px;transform:scaleX(0.7689);">50.00</b><i style="left:227px;top:543px;width:1px;height:12px;background:#c0c0c0"></i><i style="left:226px;top:559px;width:342px;height:1px;background:#000"></i><i style="left:567px;top:530px;width:1px;height:45px;background:#000"></i><i style="left:226px;top:560px;width:341px;height:15px;background:#c0c0c0;background-image:conic-gradient(#fff 25%,#c0c0c0 0 50%,#fff 0 75%,#c0c0c0 0);background-size:2px 2px"></i><i style="left:226px;top:560px;width:16px;height:15px;background:#c0c0c0"></i><i style="left:226px;top:560px;width:16px;height:1px;background:#fff"></i><i style="left:226px;top:560px;width:1px;height:15px;background:#fff"></i><i style="left:226px;top:574px;width:16px;height:1px;background:#000"></i><i style="left:241px;top:560px;width:1px;height:15px;background:#000"></i><i style="left:227px;top:573px;width:14px;height:1px;background:#808080"></i><i style="left:240px;top:561px;width:1px;height:13px;background:#808080"></i><i style="left:553px;top:560px;width:15px;height:15px;background:#c0c0c0"></i><i style="left:553px;top:560px;width:15px;height:1px;background:#fff"></i><i style="left:553px;top:560px;width:1px;height:15px;background:#fff"></i><i style="left:553px;top:574px;width:15px;height:1px;background:#000"></i><i style="left:567px;top:560px;width:1px;height:15px;background:#000"></i><i style="left:554px;top:573px;width:13px;height:1px;background:#808080"></i><i style="left:566px;top:561px;width:1px;height:13px;background:#808080"></i><svg style="left:231px;top:563px" width="5" height="9" viewBox="0 0 5 9"><path d="M4 1L0.500 4.500L4 8z" fill="#808080"/><path d="M5 1.500v7" stroke="#fff"/></svg><svg style="left:558px;top:563px" width="6" height="9" viewBox="0 0 6 9"><path d="M1 1L4.500 4.500L1 8z" fill="#808080"/><path d="M2 9l4-4" stroke="#fff"/></svg><i style="left:573px;top:119px;width:223px;height:1px;background:#808080"></i><i style="left:573px;top:119px;width:1px;height:458px;background:#808080"></i><i style="left:574px;top:120px;width:221px;height:1px;background:#000"></i><i style="left:574px;top:120px;width:1px;height:456px;background:#000"></i><i style="left:574px;top:575px;width:222px;height:1px;background:#c0c0c0"></i><i style="left:794px;top:120px;width:1px;height:456px;background:#c0c0c0"></i><i style="left:573px;top:576px;width:223px;height:1px;background:#fff"></i><i style="left:795px;top:119px;width:1px;height:458px;background:#fff"></i><i style="left:793px;top:140px;width:1px;height:435px;background:#000"></i><i style="left:574px;top:574px;width:220px;height:1px;background:#000"></i><i style="left:792px;top:141px;width:1px;height:433px;background:#808080"></i><i style="left:576px;top:573px;width:217px;height:1px;background:#808080"></i><i style="left:575px;top:123px;width:1px;height:451px;background:#fff"></i><i style="left:640px;top:140px;width:153px;height:1px;background:#fff"></i><i style="left:577px;top:121px;width:60px;height:1px;background:#fff"></i><i style="left:576px;top:122px;width:1px;height:1px;background:#fff"></i><i style="left:637px;top:123px;width:1px;height:17px;background:#808080"></i><i style="left:638px;top:123px;width:1px;height:18px;background:#000"></i><i style="left:637px;top:122px;width:1px;height:1px;background:#000"></i><b id="t71" class="u" style="left:582px;top:124px;transform:scaleX(1.0208);">解析区間</b><i style="left:639px;top:125px;width:1px;height:15px;background:#fff"></i><i style="left:640px;top:124px;width:1px;height:1px;background:#fff"></i><i style="left:641px;top:123px;width:42px;height:1px;background:#fff"></i><i style="left:683px;top:125px;width:1px;height:15px;background:#808080"></i><i style="left:684px;top:125px;width:1px;height:15px;background:#000"></i><i style="left:683px;top:124px;width:1px;height:1px;background:#000"></i><b id="t72" class="u" style="left:642.5px;top:126px;transform:scaleX(1.0417);">マーク</b><i style="left:639px;top:123px;width:3px;height:1px;background:#fff"></i><i style="left:639px;top:124px;width:1px;height:16px;background:#fff"></i><i style="left:685px;top:125px;width:1px;height:15px;background:#fff"></i><i style="left:686px;top:124px;width:1px;height:1px;background:#fff"></i><i style="left:687px;top:123px;width:44px;height:1px;background:#fff"></i><i style="left:731px;top:125px;width:1px;height:15px;background:#808080"></i><i style="left:732px;top:125px;width:1px;height:15px;background:#000"></i><i style="left:731px;top:124px;width:1px;height:1px;background:#000"></i><b id="t73" class="u" style="left:691px;top:126px;transform:scaleX(1.0694);">ピーク</b><i style="left:733px;top:125px;width:1px;height:15px;background:#fff"></i><i style="left:734px;top:124px;width:1px;height:1px;background:#fff"></i><i style="left:735px;top:123px;width:40px;height:1px;background:#fff"></i><i style="left:775px;top:125px;width:1px;height:15px;background:#808080"></i><i style="left:776px;top:125px;width:1px;height:15px;background:#000"></i><i style="left:775px;top:124px;width:1px;height:1px;background:#000"></i><b id="t74" class="u" style="left:739px;top:126px;">潜時</b><i style="left:762px;top:121px;width:32px;height:19px;background:#c0c0c0"></i><i style="left:762px;top:122px;width:16px;height:16px;background:#c0c0c0"></i><i style="left:762px;top:122px;width:16px;height:1px;background:#fff"></i><i style="left:762px;top:122px;width:1px;height:16px;background:#fff"></i><i style="left:762px;top:137px;width:16px;height:1px;background:#000"></i><i style="left:777px;top:122px;width:1px;height:16px;background:#000"></i><i style="left:763px;top:136px;width:14px;height:1px;background:#808080"></i><i style="left:776px;top:123px;width:1px;height:14px;background:#808080"></i><i style="left:778px;top:122px;width:16px;height:16px;background:#c0c0c0"></i><i style="left:778px;top:122px;width:16px;height:1px;background:#fff"></i><i style="left:778px;top:122px;width:1px;height:16px;background:#fff"></i><i style="left:778px;top:137px;width:16px;height:1px;background:#000"></i><i style="left:793px;top:122px;width:1px;height:16px;background:#000"></i><i style="left:779px;top:136px;width:14px;height:1px;background:#808080"></i><i style="left:792px;top:123px;width:1px;height:14px;background:#808080"></i><svg style="left:767px;top:126px" width="4" height="7" viewBox="0 0 4 7"><path d="M4 0L0 3.500L4 7z" fill="#000"/></svg><svg style="left:784px;top:126px" width="4" height="7" viewBox="0 0 4 7"><path d="M0 0L4 3.500L0 7z" fill="#000"/></svg><i style="left:762px;top:140px;width:31px;height:1px;background:#fff"></i><i style="left:581px;top:146px;width:191px;height:407px;background:#fff"></i><i style="left:580px;top:145px;width:209px;height:1px;background:#000"></i><i style="left:580px;top:145px;width:1px;height:426px;background:#000"></i><i style="left:772px;top:145px;width:1px;height:426px;background:#000"></i><i style="left:580px;top:553px;width:209px;height:1px;background:#000"></i><i style="left:580px;top:570px;width:193px;height:1px;background:#000"></i><i style="left:773px;top:146px;width:16px;height:407px;background:#c0c0c0;background-image:conic-gradient(#fff 25%,#c0c0c0 0 50%,#fff 0 75%,#c0c0c0 0);background-size:2px 2px"></i><i style="left:773px;top:146px;width:16px;height:15px;background:#c0c0c0"></i><i style="left:773px;top:146px;width:16px;height:1px;background:#fff"></i><i style="left:773px;top:146px;width:1px;height:15px;background:#fff"></i><i style="left:773px;top:160px;width:16px;height:1px;background:#000"></i><i style="left:788px;top:146px;width:1px;height:15px;background:#000"></i><i style="left:774px;top:159px;width:14px;height:1px;background:#808080"></i><i style="left:787px;top:147px;width:1px;height:13px;background:#808080"></i><i style="left:773px;top:539px;width:16px;height:15px;background:#c0c0c0"></i><i style="left:773px;top:539px;width:16px;height:1px;background:#fff"></i><i style="left:773px;top:539px;width:1px;height:15px;background:#fff"></i><i style="left:773px;top:553px;width:16px;height:1px;background:#000"></i><i style="left:788px;top:539px;width:1px;height:15px;background:#000"></i><i style="left:774px;top:552px;width:14px;height:1px;background:#808080"></i><i style="left:787px;top:540px;width:1px;height:13px;background:#808080"></i><svg style="left:777px;top:151px" width="8" height="6" viewBox="0 0 8 6"><path d="M0.500 4L4 0.500L7.500 4z" fill="#808080"/><path d="M1 5.500h7" stroke="#fff"/></svg><svg style="left:777px;top:544px" width="8" height="6" viewBox="0 0 8 6"><path d="M0.500 1L4 4.500L7.500 1z" fill="#808080"/><path d="M4.500 5.500l3.500-3.500" stroke="#fff"/></svg><i style="left:581px;top:554px;width:191px;height:16px;background:#c0c0c0;background-image:conic-gradient(#fff 25%,#c0c0c0 0 50%,#fff 0 75%,#c0c0c0 0);background-size:2px 2px"></i><i style="left:581px;top:554px;width:15px;height:16px;background:#c0c0c0"></i><i style="left:581px;top:554px;width:15px;height:1px;background:#fff"></i><i style="left:581px;top:554px;width:1px;height:16px;background:#fff"></i><i style="left:581px;top:569px;width:15px;height:1px;background:#000"></i><i style="left:595px;top:554px;width:1px;height:16px;background:#000"></i><i style="left:582px;top:568px;width:13px;height:1px;background:#808080"></i><i style="left:594px;top:555px;width:1px;height:14px;background:#808080"></i><i style="left:757px;top:554px;width:15px;height:16px;background:#c0c0c0"></i><i style="left:757px;top:554px;width:15px;height:1px;background:#fff"></i><i style="left:757px;top:554px;width:1px;height:16px;background:#fff"></i><i style="left:757px;top:569px;width:15px;height:1px;background:#000"></i><i style="left:771px;top:554px;width:1px;height:16px;background:#000"></i><i style="left:758px;top:568px;width:13px;height:1px;background:#808080"></i><i style="left:770px;top:555px;width:1px;height:14px;background:#808080"></i><i style="left:596px;top:554px;width:63px;height:16px;background:#c0c0c0"></i><i style="left:596px;top:554px;width:63px;height:1px;background:#fff"></i><i style="left:596px;top:554px;width:1px;height:16px;background:#fff"></i><i style="left:596px;top:569px;width:63px;height:1px;background:#000"></i><i style="left:658px;top:554px;width:1px;height:16px;background:#000"></i><i style="left:597px;top:568px;width:61px;height:1px;background:#808080"></i><i style="left:657px;top:555px;width:1px;height:14px;background:#808080"></i><svg style="left:585px;top:558px" width="4" height="7" viewBox="0 0 4 7"><path d="M4 0L0 3.500L4 7z" fill="#000"/></svg><svg style="left:763px;top:558px" width="4" height="7" viewBox="0 0 4 7"><path d="M0 0L4 3.500L0 7z" fill="#000"/></svg><i style="left:773px;top:554px;width:16px;height:16px;background:#c0c0c0"></i><b id="t75" class="j" style="left:582px;top:147px;">範囲</b><b id="t76" class="m" style="left:606px;top:148px;transform:scaleX(0.7690);">(msec)</b><b id="t77" class="m" style="left:582px;top:160px;transform:scaleX(0.7690);">P14</b><b id="t78" class="m" style="left:690px;top:160px;transform:scaleX(0.7691);">11.60 - 13.60</b><b id="t79" class="m" style="left:582px;top:172px;transform:scaleX(0.7690);">N18</b><b id="t80" class="m" style="left:690px;top:172px;transform:scaleX(0.7691);">15.00 - 17.00</b><b id="t81" class="m" style="left:582px;top:184px;transform:scaleX(0.7690);">P24</b><b id="t82" class="m" style="left:690px;top:184px;transform:scaleX(0.7691);">18.00 - 20.00</b><b id="t83" class="m" style="left:582px;top:196px;transform:scaleX(0.7690);">N33</b><b id="t84" class="m" style="left:690px;top:196px;transform:scaleX(0.7691);">26.00 - 28.00</b><b id="t85" class="j" style="left:582px;top:219px;">ピーク位置</b><b id="t86" class="m" style="left:642px;top:220px;transform:scaleX(0.7680);">/</b><b id="t87" class="j" style="left:648px;top:219px;">ピーク電位</b><b id="t88" class="m" style="left:582px;top:232px;transform:scaleX(0.7688);">$Sep</b><b id="t89" class="m" style="left:750px;top:244px;transform:scaleX(0.7690);">P14</b><b id="t90" class="m" style="left:582px;top:256px;transform:scaleX(0.7688);">C3</b><b id="t91" class="m" style="left:600px;top:256px;transform:scaleX(0.7690);">(msec)</b><b id="t92" class="m" style="left:738px;top:256px;transform:scaleX(0.7689);">12.80</b><b id="t93" class="m" style="left:600px;top:268px;transform:scaleX(0.7680);">(</b><b id="t94" class="m" style="left:606.5px;top:268px;transform:scaleX(1.2800);">μ</b><b id="t95" class="m" style="left:618px;top:268px;transform:scaleX(0.7688);">V)</b><b id="t96" class="m" style="left:738px;top:268px;transform:scaleX(0.7689);">-3.30</b><b id="t97" class="m" style="left:582px;top:280px;transform:scaleX(0.7688);">C4</b><b id="t98" class="m" style="left:600px;top:280px;transform:scaleX(0.7690);">(msec)</b><b id="t99" class="m" style="left:738px;top:280px;transform:scaleX(0.7689);">12.80</b><b id="t100" class="m" style="left:600px;top:292px;transform:scaleX(0.7680);">(</b><b id="t101" class="m" style="left:606.5px;top:292px;transform:scaleX(1.2800);">μ</b><b id="t102" class="m" style="left:618px;top:292px;transform:scaleX(0.7688);">V)</b><b id="t103" class="m" style="left:738px;top:292px;transform:scaleX(0.7689);">-2.23</b><b id="t104" class="m" style="left:582px;top:304px;transform:scaleX(0.7688);">Fz</b><b id="t105" class="m" style="left:600px;top:304px;transform:scaleX(0.7690);">(msec)</b><b id="t106" class="m" style="left:738px;top:304px;transform:scaleX(0.7689);">12.70</b><b id="t107" class="m" style="left:600px;top:316px;transform:scaleX(0.7680);">(</b><b id="t108" class="m" style="left:606.5px;top:316px;transform:scaleX(1.2800);">μ</b><b id="t109" class="m" style="left:618px;top:316px;transform:scaleX(0.7688);">V)</b><b id="t110" class="m" style="left:738px;top:316px;transform:scaleX(0.7689);">-2.41</b><b id="t111" class="m" style="left:582px;top:328px;transform:scaleX(0.7688);">Cz</b><b id="t112" class="m" style="left:600px;top:328px;transform:scaleX(0.7690);">(msec)</b><b id="t113" class="m" style="left:738px;top:328px;transform:scaleX(0.7689);">12.80</b><b id="t114" class="m" style="left:600px;top:340px;transform:scaleX(0.7680);">(</b><b id="t115" class="m" style="left:606.5px;top:340px;transform:scaleX(1.2800);">μ</b><b id="t116" class="m" style="left:618px;top:340px;transform:scaleX(0.7688);">V)</b><b id="t117" class="m" style="left:738px;top:340px;transform:scaleX(0.7689);">-3.30</b><b id="t118" class="u" style="left:6px;top:581px;transform:scaleX(0.9167);">ﾚﾃﾞｨ</b><i style="left:488px;top:579px;width:194px;height:1px;background:#808080"></i><i style="left:488px;top:579px;width:1px;height:17px;background:#808080"></i><i style="left:488px;top:595px;width:194px;height:1px;background:#fff"></i><i style="left:681px;top:579px;width:1px;height:17px;background:#fff"></i><i style="left:684px;top:579px;width:94px;height:1px;background:#808080"></i><i style="left:684px;top:579px;width:1px;height:17px;background:#808080"></i><i style="left:684px;top:595px;width:94px;height:1px;background:#fff"></i><i style="left:777px;top:579px;width:1px;height:17px;background:#fff"></i><svg style="left:781px;top:582px" width="14" height="14" viewBox="0 0 14 14"><path d="M13 1L1 13M13 5L5 13M13 9L9 13" stroke="#fff" stroke-width="1"/><path d="M13.500 2L2 13.500M13.500 3L3 13.500M13.500 6L6 13.500M13.500 7L7 13.500M13.500 10L10 13.500M13.500 11L11 13.500" stroke="#808080" stroke-width="1"/></svg></div></body></html>
